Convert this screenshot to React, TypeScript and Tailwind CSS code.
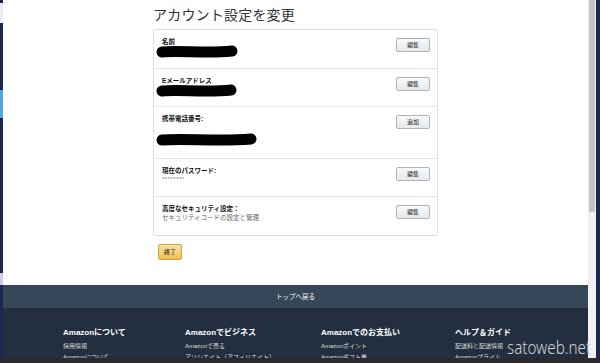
const font = "font-['Liberation_Sans','Noto_Sans_CJK_JP',sans-serif]";

type Row = {
  label: string;
  sub?: string;
  stars?: boolean;
  scribble?: number;
  action: string;
  h: string;
};

const rows: Row[] = [
  { label: "名前", scribble: 82, action: "編集", h: "h-[38px]" },
  { label: "Eメールアドレス", scribble: 81, action: "編集", h: "h-[38px]" },
  { label: "携帯電話番号:", scribble: 101, action: "追加", h: "h-[52px]" },
  { label: "現在のパスワード:", stars: true, action: "編集", h: "h-[38px]" },
  {
    label: "高度なセキュリティ設定：",
    sub: "セキュリティコードの設定と管理",
    action: "編集",
    h: "h-[39px]",
  },
];

const footerCols = [
  { title: "Amazonについて", links: ["採用情報", "Amazonについて"], w: "w-[122px]" },
  { title: "Amazonでビジネス", links: ["Amazonで売る", "アソシエイト（アフィリエイト）"], w: "w-[136px]" },
  { title: "Amazonでのお支払い", links: ["Amazonポイント", "Amazonギフト券"], w: "w-[134px]" },
  { title: "ヘルプ＆ガイド", links: ["配送料と配送情報", "Amazonプライム"], w: "w-[120px]" },
];

// redaction marker stroke
function Scribble({ width }: { width: number }) {
  return (
    <svg width={width} height={14} viewBox={`0 0 ${width} 14`} className="block">
      <path
        d={`M6 7 C ${width * 0.3} 5, ${width * 0.6} 9, ${width - 6} 6`}
        stroke="#000"
        strokeWidth={11}
        strokeLinecap="round"
        fill="none"
      />
    </svg>
  );
}

export default function App() {
  return (
    <div className={`relative w-[600px] h-[363px] overflow-hidden flex flex-col bg-white ${font}`}>
      <div className="flex flex-1 min-h-0">
        {/* desktop edge */}
        <div className="w-[3px] bg-[#1d2553] flex flex-col">
          <div className="h-[20px] bg-[#e8ecf5] mt-[3px]" />
          <div className="h-[28px] bg-[#4fa6e0] mt-[67px]" />
          <div className="h-[12px] bg-[#c9cdf0] mt-[155px]" />
        </div>

        {/* page */}
        <div className="w-[585px] flex flex-col">
          <div className="h-[285px] shrink-0 pl-[150px] pt-[6px]">
            <h1 className="text-[14px] leading-[18px] text-[#333] tracking-[0.2px]">
              アカウント設定を変更
            </h1>
            <div className="mt-[5px] w-[285px] border border-[#ddd] rounded-[3px]">
              {rows.map((r, i) => (
                <div
                  key={r.label}
                  className={`${r.h} flex justify-between pl-[8px] pr-[7px] pt-[7px] ${
                    i > 0 ? "border-t border-[#e7e7e7]" : ""
                  }`}
                >
                  <div className="flex flex-col">
                    <span className="text-[6.5px] leading-[9px] font-bold text-[#111]">{r.label}</span>
                    {r.scribble && (
                      <div className={`-ml-[6px] ${i === 2 ? "mt-[10px]" : "mt-[-1px]"}`}>
                        <Scribble width={r.scribble} />
                      </div>
                    )}
                    {r.stars && (
                      <span className="text-[6px] leading-[8px] text-[#777] tracking-[0.5px]">********</span>
                    )}
                    {r.sub && <span className="text-[6.5px] leading-[9px] text-[#666]">{r.sub}</span>}
                  </div>
                  <button className="w-[34px] h-[14px] mt-[1px] text-[6px] text-[#111] rounded-[2px] border border-[#adb1b8] bg-gradient-to-b from-[#f7f8fa] to-[#e7e9ec]">
                    {r.action}
                  </button>
                </div>
              ))}
            </div>
            <button className="mt-[8px] ml-[5px] w-[24px] h-[16px] text-[6px] text-[#111] rounded-[2px] border border-[#c9a53a] bg-gradient-to-b from-[#f7dfa5] to-[#f0c14b]">
              終了
            </button>
          </div>

          <div className="h-[23px] shrink-0 bg-[#37475a] flex items-center justify-center text-[6.5px] text-white">
            トップへ戻る
          </div>

          <div className="flex-1 min-h-0 overflow-hidden bg-[#232f3e] pl-[60px] pt-[20px] flex">
            {footerCols.map((c) => (
              <div key={c.title} className={`${c.w} flex flex-col`}>
                <span className="text-[8px] leading-[10px] font-bold text-white">{c.title}</span>
                <div className="mt-[4px] flex flex-col gap-[3px]">
                  {c.links.map((l) => (
                    <span key={l} className="text-[6px] leading-[8px] text-[#ddd]">
                      {l}
                    </span>
                  ))}
                </div>
              </div>
            ))}
          </div>
        </div>

        {/* scrollbar */}
        <div className="w-[8px] bg-[#f0f0f0] flex flex-col">
          <div className="h-[212px] mx-[1px] bg-[#c4c4c4]" />
        </div>

        {/* desktop edge */}
        <div className="w-[4px] bg-[#1d2553]" />
      </div>

      {/* taskbar */}
      <div className="h-[5px] shrink-0 bg-[#2a2a2e]" />

      <span className="absolute left-[507px] top-[335px] origin-left scale-x-[0.8] text-[19px] leading-[24px] font-light text-[#cfd2d6] font-['Noto_Sans',sans-serif]">
        satoweb.net
      </span>
    </div>
  );
}
